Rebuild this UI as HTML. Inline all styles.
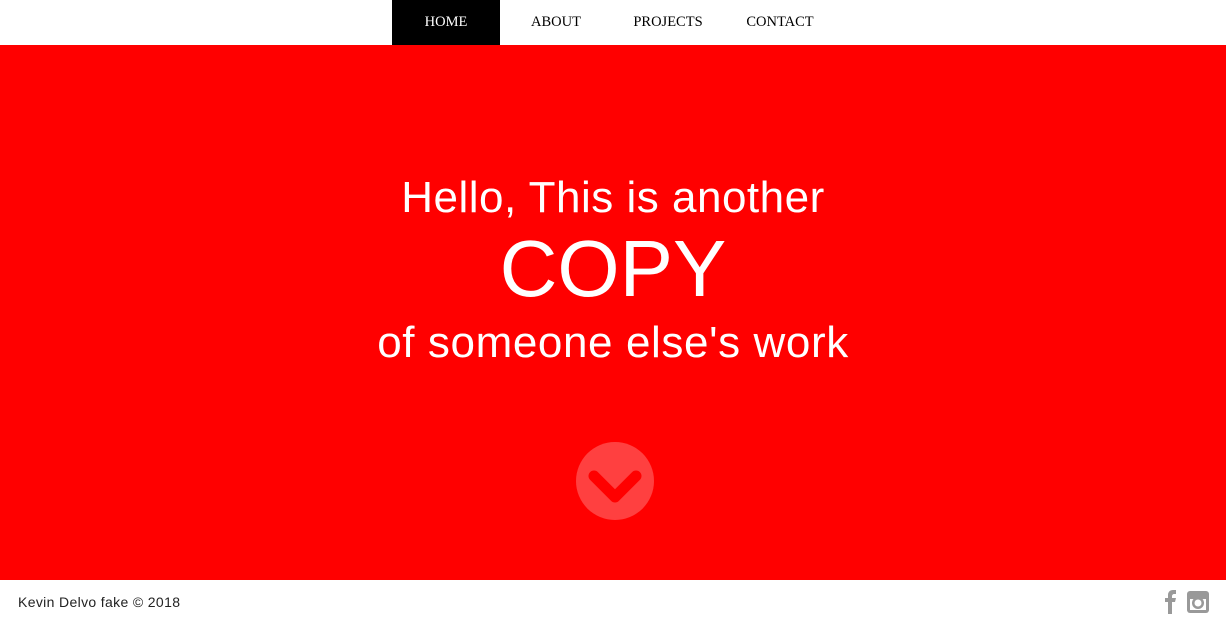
<!DOCTYPE html>
<html><head><style>
body{margin:0;width:1226px;height:624px;overflow:hidden;background:#fff;font-family:"Liberation Sans",sans-serif}
nav{position:absolute;top:0;left:392px;height:45px;display:flex}
nav a{display:block;width:112px;height:45px;line-height:44px;text-align:center;font-family:"Liberation Serif",serif;font-size:14.5px;color:#000;text-decoration:none}
nav a.on{background:#000;color:#fff;width:108px}
.hero{position:absolute;top:45px;left:0;width:1226px;height:535px;background:#ff0000;color:#fff;text-align:center}
.t{position:absolute;left:0;width:100%;white-space:nowrap;font-weight:300}
footer{position:absolute;top:580px;left:0;width:1226px;height:44px}
</style></head><body>
<nav><a class="on">HOME</a><a>ABOUT</a><a>PROJECTS</a><a>CONTACT</a></nav>
<div class="hero">
<div class="t" style="top:128px;font-size:44px;letter-spacing:0.5px">Hello, This is another</div>
<div class="t" style="top:178px;font-size:80px">COPY</div>
<div class="t" style="top:273px;font-size:44px;letter-spacing:0.6px">of someone else's work</div>
<svg style="position:absolute;left:576px;top:397px" width="78" height="78" viewBox="0 0 78 78"><circle cx="39" cy="39" r="39" fill="#ff4040"/><path d="M18 34 L39 55 L60 34" fill="none" stroke="#ff0000" stroke-width="11" stroke-linecap="round" stroke-linejoin="round"/></svg>
</div>
<footer>
<div style="position:absolute;left:18px;top:14px;font-size:14px;letter-spacing:0.35px;color:#222">Kevin Delvo fake © 2018</div>
<svg style="position:absolute;left:1162px;top:9px" width="50" height="26" viewBox="0 0 50 26"><path d="M6 25V13H3V9h3V6c0-3 2-5 5-5h3v4h-2c-1 0-2 1-2 2v2h4l-1 4h-3v12z" fill="#999"/><rect x="25" y="2" width="22" height="22" rx="3" fill="#999"/><rect x="28" y="9" width="16" height="12" fill="#fff"/><circle cx="36" cy="14" r="6" fill="#999"/><circle cx="36" cy="14" r="3.5" fill="#fff"/><rect x="25" y="8" width="22" height="2" fill="#999"/></svg>
</footer>
</body></html>
